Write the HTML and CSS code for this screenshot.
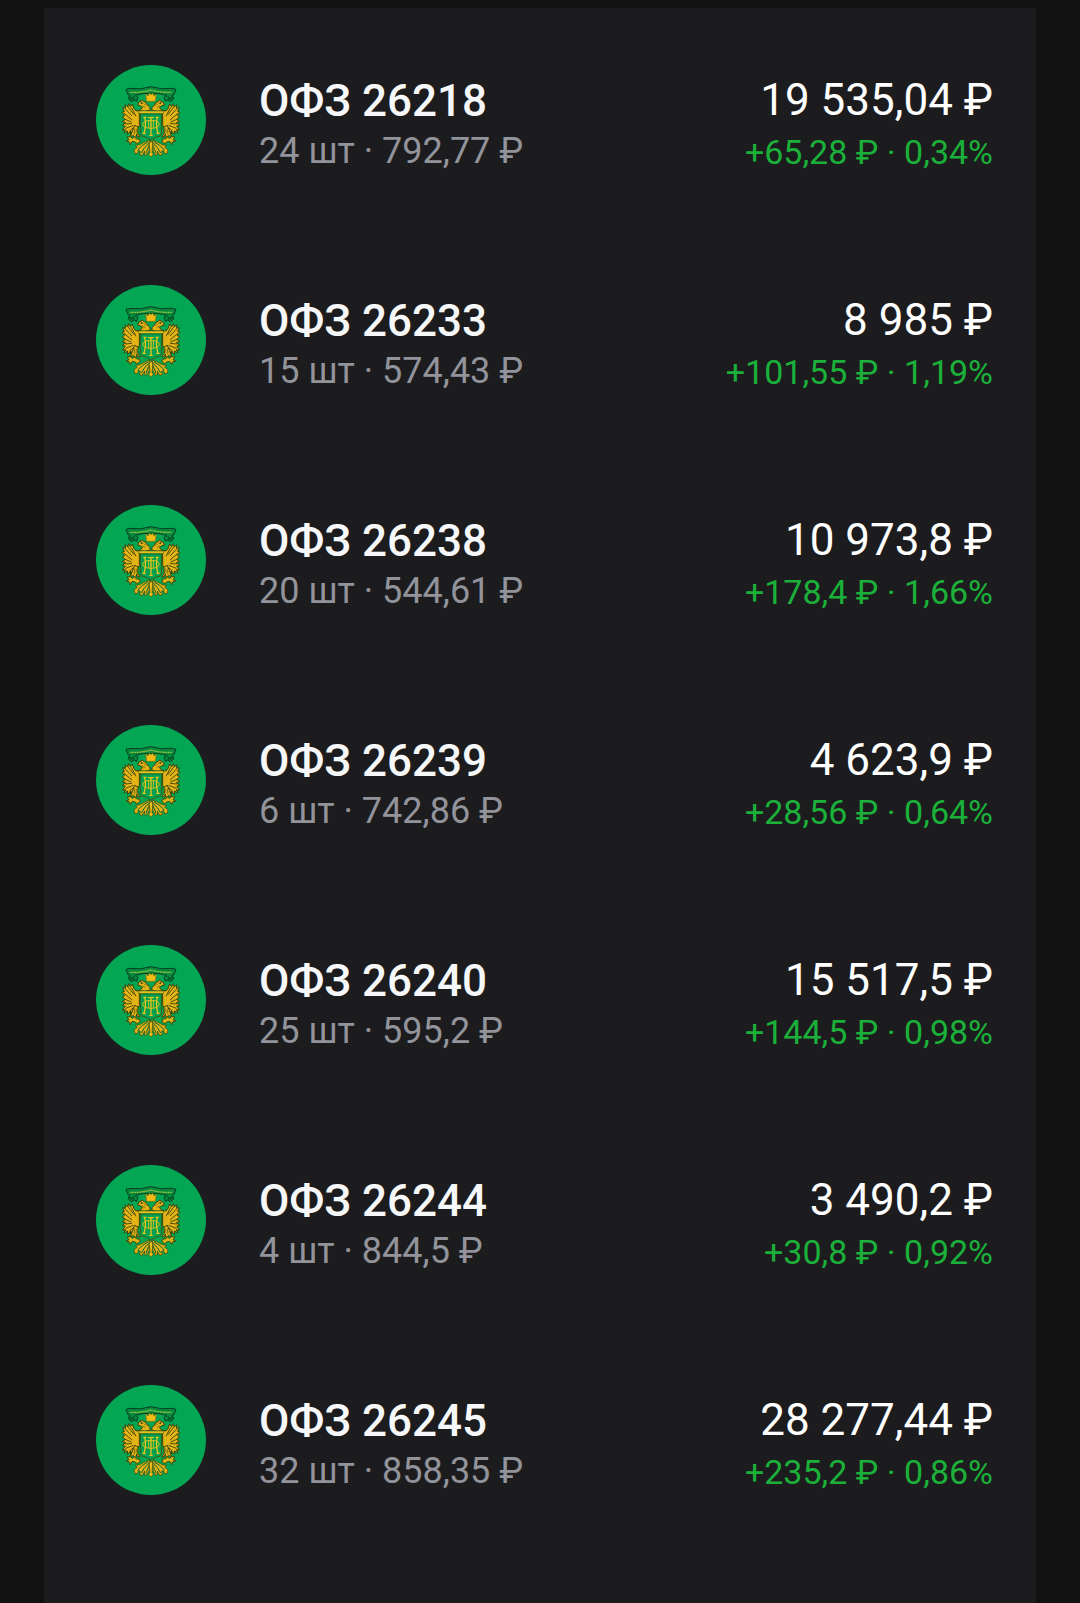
FILE: index.html
```html
<!DOCTYPE html>
<html lang="ru">
<head>
<meta charset="utf-8">
<meta name="viewport" content="width=device-width, initial-scale=1">
<title>ОФЗ</title>
<link rel="stylesheet" href="styles.css">
</head>
<body>
<svg class="defs" aria-hidden="true">
  <symbol id="emblem" viewBox="18 15 330 330">
    <path d="M108 88L120 85Q152 90 183 80Q214 90 246 85L258 88L252 104L246 106L252 116L242 125L232 120L226 124L222 112L230 106Q206 98 183 101Q160 98 136 106L144 112L140 124L134 120L124 125L114 116L120 106L114 104Z" fill="#078a3e" stroke="#063f22" stroke-width="3"/>
    <path d="M117 112L134 118M134 108L121 121M249 112L232 118M232 108L245 121" stroke="#06401f" stroke-width="3"/>
    <path d="M120 97Q152 99 183 90Q214 99 246 97" fill="none" stroke="#8fc23c" stroke-width="4" stroke-dasharray="4 1"/>
    <g id="wing">
      <path d="M148 151L138 153L131 144L127 132L121 140L116 131L113 141L106 134L106 145L98 143L103 155L96 157L104 166L97 171L106 178L97 185L107 188L97 196L106 199L97 210L107 209L102 219L113 213L112 223L123 213L121 222L132 209L148 198Z" fill="#e4b416" stroke="#3f430c" stroke-width="3"/>
      <path d="M106 147L126 168M102 160L126 180M103 177L124 186M105 192L126 190M107 205L130 196M114 140L132 164M124 142L138 169M118 214L137 197" fill="none" stroke="#4b500c" stroke-width="3"/>
      <path d="M148 152L158 143L151 137L143 135L147 126L157 121L168 128L175 138L180 143L180 151L164 154Z" fill="#e4b416" stroke="#3f430c" stroke-width="3"/>
      <path d="M156 137L166 143M160 130L170 137" stroke="#5b560c" stroke-width="2"/>
      <circle cx="155" cy="129" r="3" fill="#37410e"/>
      <path d="M134 196L144 201L143 220L151 231L143 230L140 222L137 234L131 227L121 229L127 214Z" fill="#e4b416" stroke="#3f430c" stroke-width="3"/>
      <path d="M134 206L132 224M139 206L138 220" stroke="#4f540c" stroke-width="2"/>
      <path d="M149 238L139 236L134 231L127 235L121 230L111 231L117 239L108 243L119 246L120 254L127 244L135 246L142 251L150 245Z" fill="#ddb518" stroke="#3f4a0c" stroke-width="3"/>
      <path d="M178 241Q162 246 147 255L136 256L142 262L132 269L135 281L143 280L145 271L151 274L149 284L157 286L164 273L163 284L170 285L177 272Z" fill="#e4b416" stroke="#3f430c" stroke-width="2"/>
      <path d="M174 246Q155 255 143 270M178 249Q163 260 154 279M179 255Q172 265 168 280" fill="none" stroke="#07612f" stroke-width="3"/>
    </g>
    <use href="#wing" transform="translate(366 0) scale(-1 1)"/>
    <path d="M167 102L174 108L178 99L183 104L188 99L192 108L199 102L196 124H170Z" fill="#f4bd16" stroke="#806d0c" stroke-width="2"/>
    <path d="M147 153H219V160H215V221Q214 229 200 231L183 240L166 231Q152 229 151 221V160H147Z" fill="#00a050" stroke="#3d5b12" stroke-width="3"/>
    <path d="M147 154H219V160H147Z" fill="#eabb18"/>
    <path d="M147 162H219" stroke="#3d4d10" stroke-width="2"/>
    <path d="M160 172H169M197 172H206M164 172Q170 196 162 219M202 172Q196 196 204 219M157 220H167M199 220H209M174 173H192M183 172V226M178 226H188" fill="none" stroke="#e8c61a" stroke-width="4"/>
    <ellipse cx="183" cy="193" rx="25" ry="12" fill="none" stroke="#e0c31a" stroke-width="3"/>
    <path d="M176 182V204M190 182V204" stroke="#d3bd1b" stroke-width="3"/>
    <path d="M183 241L188 251L186 278L190 283L183 291L176 283L180 278L178 251Z" fill="#f1bd18" stroke="#554f0b" stroke-width="2"/>
  </symbol>
</svg>
<main class="portfolio">
  <ul class="bonds">
    <li class="bond">
      <svg class="logo" aria-hidden="true"><use href="#emblem"/></svg>
      <div class="info"><h2 class="name">ОФЗ 26218</h2><p class="holding">24 шт · 792,77 ₽</p></div>
      <div class="value"><p class="total">19 535,04 ₽</p><p class="gain">+65,28 ₽ · 0,34%</p></div>
    </li>
    <li class="bond">
      <svg class="logo" aria-hidden="true"><use href="#emblem"/></svg>
      <div class="info"><h2 class="name">ОФЗ 26233</h2><p class="holding">15 шт · 574,43 ₽</p></div>
      <div class="value"><p class="total">8 985 ₽</p><p class="gain">+101,55 ₽ · 1,19%</p></div>
    </li>
    <li class="bond">
      <svg class="logo" aria-hidden="true"><use href="#emblem"/></svg>
      <div class="info"><h2 class="name">ОФЗ 26238</h2><p class="holding">20 шт · 544,61 ₽</p></div>
      <div class="value"><p class="total">10 973,8 ₽</p><p class="gain">+178,4 ₽ · 1,66%</p></div>
    </li>
    <li class="bond">
      <svg class="logo" aria-hidden="true"><use href="#emblem"/></svg>
      <div class="info"><h2 class="name">ОФЗ 26239</h2><p class="holding">6 шт · 742,86 ₽</p></div>
      <div class="value"><p class="total">4 623,9 ₽</p><p class="gain">+28,56 ₽ · 0,64%</p></div>
    </li>
    <li class="bond">
      <svg class="logo" aria-hidden="true"><use href="#emblem"/></svg>
      <div class="info"><h2 class="name">ОФЗ 26240</h2><p class="holding">25 шт · 595,2 ₽</p></div>
      <div class="value"><p class="total">15 517,5 ₽</p><p class="gain">+144,5 ₽ · 0,98%</p></div>
    </li>
    <li class="bond">
      <svg class="logo" aria-hidden="true"><use href="#emblem"/></svg>
      <div class="info"><h2 class="name">ОФЗ 26244</h2><p class="holding">4 шт · 844,5 ₽</p></div>
      <div class="value"><p class="total">3 490,2 ₽</p><p class="gain">+30,8 ₽ · 0,92%</p></div>
    </li>
    <li class="bond">
      <svg class="logo" aria-hidden="true"><use href="#emblem"/></svg>
      <div class="info"><h2 class="name">ОФЗ 26245</h2><p class="holding">32 шт · 858,35 ₽</p></div>
      <div class="value"><p class="total">28 277,44 ₽</p><p class="gain">+235,2 ₽ · 0,86%</p></div>
    </li>
  </ul>
</main>
</body>
</html>
```
FILE: styles.css
```css
* {
  box-sizing: border-box;
  margin: 0;
  padding: 0;
}

body {
  background: #111111;
  color: #ffffff;
  font-family: Roboto, "Noto Sans", sans-serif;
}

.defs {
  display: none;
}

.portfolio {
  padding: 8px 44px 0;
}

.bonds {
  display: flex;
  flex-direction: column;
  gap: 106px;
  padding: 57px 43px 104px 52px;
  background: #1c1c1e;
  list-style: none;
}

.bond {
  display: flex;
  align-items: flex-start;
}

.logo {
  flex: none;
  width: 110px;
  height: 110px;
  margin-right: 53px;
  border-radius: 50%;
  background: #03a653;
}

.info,
.value {
  padding-top: 10px;
  white-space: nowrap;
}

.info {
  flex: 1;
}

.value {
  text-align: right;
}

.name {
  color: #f6f7f8;
  font-size: 44px;
  font-weight: 500;
  line-height: 52px;
}

.holding {
  color: #92939b;
  font-size: 36px;
  line-height: 48px;
}

.total {
  font-size: 44px;
  font-weight: 400;
  line-height: 50px;
}

.gain {
  color: #1bb03a;
  font-size: 34px;
  line-height: 54px;
}
```
